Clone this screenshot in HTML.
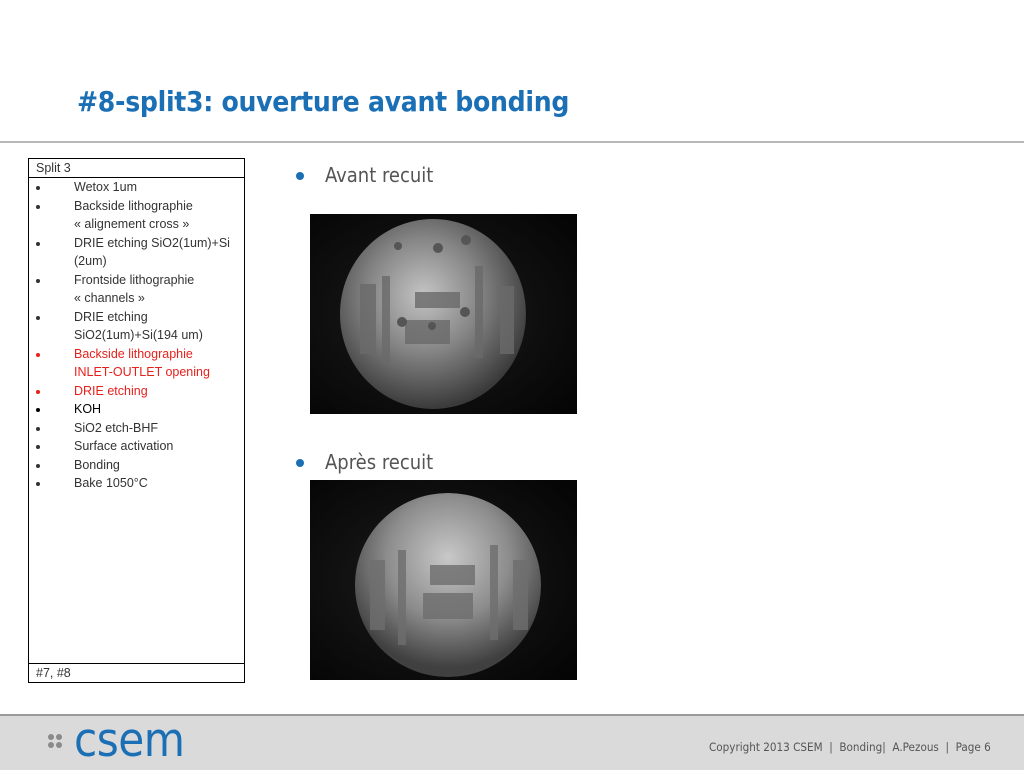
<!DOCTYPE html>
<html><head><meta charset="utf-8"><style>
body{margin:0;width:1024px;height:768px;position:relative;background:#fff;font-family:"Liberation Sans",Arial,sans-serif;overflow:hidden}
.title{position:absolute;left:77px;top:85px;font-size:28px;font-weight:bold;color:#1a6fb5;font-family:"DejaVu Sans Condensed","Liberation Sans",sans-serif;letter-spacing:-0.3px}
.hline{position:absolute;left:0;top:141px;width:1024px;height:2px;background:#b8b8b8}
.tbl{position:absolute;left:28px;top:158px;width:215px;height:523px;border:1.5px solid #000;font-size:12.5px;color:#333}
.hd{height:18px;border-bottom:1.5px solid #000;padding-left:7px;line-height:18px}
.ft{position:absolute;left:0;bottom:0;width:208px;height:18px;border-top:1.5px solid #000;padding-left:7px;line-height:18px}
.row{position:relative;height:18.5px;line-height:18.5px;padding-left:45px}
.row.b::before{content:"";position:absolute;left:7px;top:8px;width:4px;height:4px;border-radius:50%;background:currentColor}
.red{color:#e8201c}.blk{color:#000}
.bul{position:absolute;font-size:20px;color:#555;font-family:"DejaVu Sans Condensed","Liberation Sans",sans-serif}
.bul span{position:absolute;left:-29px;top:9px;width:8px;height:8px;border-radius:50%;background:#1a6fb5}
.foot{position:absolute;left:0;top:714px;width:1024px;height:54px;background:#dadada;border-top:2px solid #9a9a9a}
.copy{position:absolute;left:709px;top:740px;font-size:11.6px;color:#555;font-family:"DejaVu Sans Condensed","Liberation Sans",sans-serif}
.logo{position:absolute;left:74px;top:713px;font-size:47px;color:#1a6fb5;font-family:"DejaVu Sans Condensed","Liberation Sans",sans-serif;letter-spacing:-0.5px}
</style></head><body>
<div class="title">#8-split3: ouverture avant bonding</div>
<div class="hline"></div>
<div class="tbl">
<div class="hd">Split 3</div>
<div class="row b">Wetox 1um</div>
<div class="row b">Backside lithographie</div>
<div class="row">« alignement cross »</div>
<div class="row b">DRIE etching SiO2(1um)+Si</div>
<div class="row">(2um)</div>
<div class="row b">Frontside lithographie</div>
<div class="row">« channels »</div>
<div class="row b">DRIE etching</div>
<div class="row">SiO2(1um)+Si(194 um)</div>
<div class="row b red">Backside lithographie</div>
<div class="row red">INLET-OUTLET opening</div>
<div class="row b red">DRIE etching</div>
<div class="row b blk">KOH</div>
<div class="row b">SiO2 etch-BHF</div>
<div class="row b">Surface activation</div>
<div class="row b">Bonding</div>
<div class="row b">Bake 1050°C</div>
<div class="ft">#7, #8</div>
</div>
<div class="bul" style="left:325px;top:163px"><span></span>Avant recuit</div>
<div class="bul" style="left:325px;top:450px"><span></span>Après recuit</div>
<svg style="position:absolute;left:310px;top:214px" width="267" height="200">
<defs><radialGradient id="g1" cx="0.45" cy="0.4" r="0.6"><stop offset="0" stop-color="#c4c4c4"/><stop offset="0.5" stop-color="#858585"/><stop offset="1" stop-color="#3a3a3a"/></radialGradient>
<radialGradient id="bg" cx="0.45" cy="0.5" r="0.7"><stop offset="0" stop-color="#1c1c1c"/><stop offset="1" stop-color="#050505"/></radialGradient></defs>
<rect width="267" height="200" fill="url(#bg)"/>
<ellipse cx="123" cy="100" rx="93" ry="95" fill="url(#g1)"/>
<g fill="#6a6a6a" opacity="0.8"><rect x="105" y="78" width="45" height="16"/><rect x="95" y="106" width="45" height="24"/><rect x="72" y="62" width="8" height="88"/><rect x="165" y="52" width="8" height="92"/><rect x="50" y="70" width="16" height="70"/><rect x="190" y="72" width="14" height="68"/></g>
<g fill="#555"><circle cx="88" cy="32" r="4"/><circle cx="128" cy="34" r="5"/><circle cx="156" cy="26" r="5"/><circle cx="92" cy="108" r="5"/><circle cx="155" cy="98" r="5"/><circle cx="122" cy="112" r="4"/></g>
</svg>
<svg style="position:absolute;left:310px;top:480px" width="267" height="200">
<defs><radialGradient id="g2" cx="0.5" cy="0.35" r="0.6"><stop offset="0" stop-color="#c8c8c8"/><stop offset="0.55" stop-color="#8c8c8c"/><stop offset="1" stop-color="#404040"/></radialGradient></defs>
<rect width="267" height="200" fill="url(#bg)"/>
<ellipse cx="138" cy="105" rx="93" ry="92" fill="url(#g2)"/>
<g fill="#6e6e6e" opacity="0.8"><rect x="120" y="85" width="45" height="20"/><rect x="113" y="113" width="50" height="26"/><rect x="88" y="70" width="8" height="95"/><rect x="180" y="65" width="8" height="95"/><rect x="60" y="80" width="15" height="70"/><rect x="203" y="80" width="15" height="70"/></g>
</svg>
<div class="foot"></div>
<svg style="position:absolute;left:47px;top:733px" width="20" height="20"><g fill="#8a8a8a"><circle cx="4" cy="4" r="3"/><circle cx="12" cy="4" r="3"/><circle cx="4" cy="12" r="3"/><circle cx="12" cy="12" r="3"/></g></svg>
<div class="logo">csem</div>
<div class="copy">Copyright 2013 CSEM &nbsp;| &nbsp;Bonding| &nbsp;A.Pezous &nbsp;| &nbsp;Page 6</div>
</body></html>
